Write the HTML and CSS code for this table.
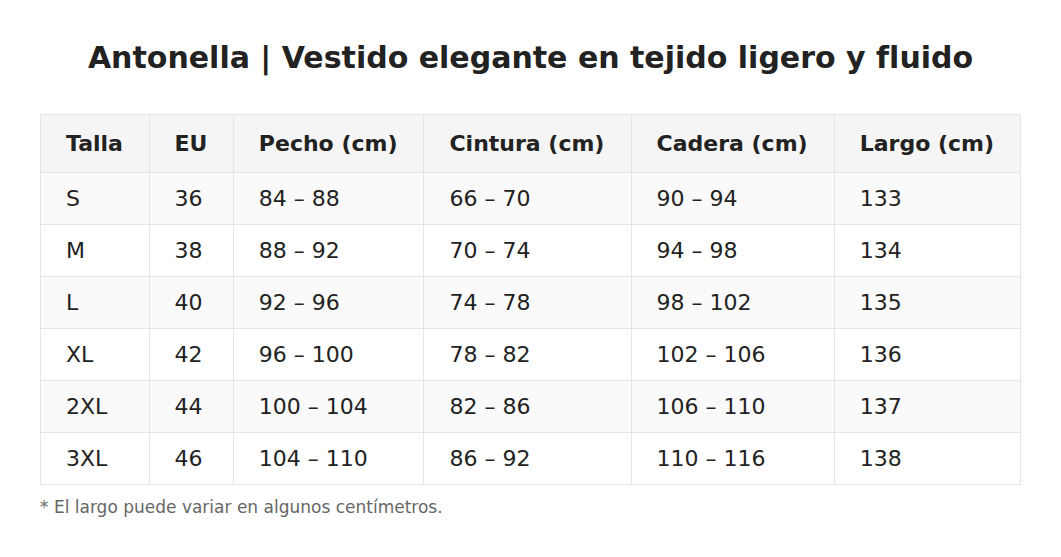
FILE: index.html
```html
<!DOCTYPE html>
<html lang="es">
<head>
<meta charset="utf-8">
<title>Antonella | Guía de tallas</title>
<link rel="stylesheet" href="styles.css">
</head>
<body>
<main class="page">
  <h1 class="title">Antonella | Vestido elegante en tejido ligero y fluido</h1>
  <table class="sizes">
    <thead>
      <tr><th>Talla</th><th>EU</th><th>Pecho (cm)</th><th>Cintura (cm)</th><th>Cadera (cm)</th><th>Largo (cm)</th></tr>
    </thead>
    <tbody>
      <tr><td>S</td><td>36</td><td>84 – 88</td><td>66 – 70</td><td>90 – 94</td><td>133</td></tr>
      <tr><td>M</td><td>38</td><td>88 – 92</td><td>70 – 74</td><td>94 – 98</td><td>134</td></tr>
      <tr><td>L</td><td>40</td><td>92 – 96</td><td>74 – 78</td><td>98 – 102</td><td>135</td></tr>
      <tr><td>XL</td><td>42</td><td>96 – 100</td><td>78 – 82</td><td>102 – 106</td><td>136</td></tr>
      <tr><td>2XL</td><td>44</td><td>100 – 104</td><td>82 – 86</td><td>106 – 110</td><td>137</td></tr>
      <tr><td>3XL</td><td>46</td><td>104 – 110</td><td>86 – 92</td><td>110 – 116</td><td>138</td></tr>
    </tbody>
  </table>
  <p class="note">* El largo puede variar en algunos centímetros.</p>
</main>
</body>
</html>
```
FILE: styles.css
```css
html, body {
  margin: 0;
  padding: 0;
  background: #ffffff;
}
body {
  font-family: "DejaVu Sans", sans-serif;
  color: #222222;
}
.page {
  padding: 40px 40px;
}
.title {
  margin: 0 0 39px;
  font-size: 30px;
  font-weight: bold;
  text-align: center;
  color: #222222;
}
.sizes {
  width: 100%;
  border-collapse: collapse;
  font-size: 22px;
}
.sizes th,
.sizes td {
  border: 1px solid #e5e5e5;
  text-align: left;
  padding: 0 25px;
  white-space: nowrap;
}
.sizes th {
  height: 57px;
  background: #f5f5f5;
  font-weight: bold;
}
.sizes td {
  height: 51px;
}
.sizes tbody tr:nth-child(odd) {
  background: #fafafa;
}
.note {
  margin: 12px 0 0;
  font-size: 17px;
  color: #666666;
}
```
